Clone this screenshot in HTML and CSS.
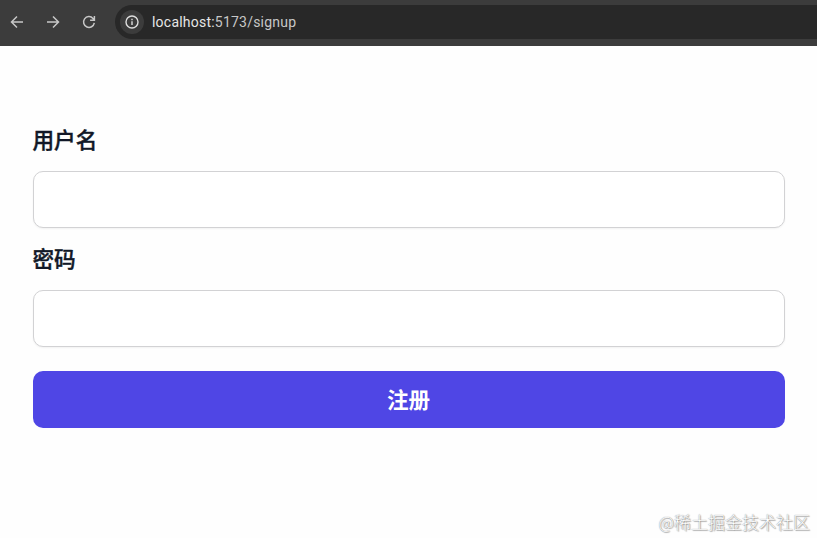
FILE: index.html
```html
<!DOCTYPE html>
<html lang="zh-CN">
<head>
<meta charset="utf-8">
<title>注册</title>
<link rel="stylesheet" href="styles.css">
</head>
<body>
<header class="toolbar">
  <nav class="nav">
    <svg class="icon" viewBox="0 0 16 16"><path d="M14 8H2.8M8 2.5 2.5 8 8 13.5"/></svg>
    <svg class="icon" viewBox="0 0 16 16"><path d="M2 8h11.2M8 2.5 13.5 8 8 13.5"/></svg>
    <svg class="icon" viewBox="0 0 16 16"><path d="M13.3 8.9A5.4 5.4 0 1 1 12 4.4L13.1 5.7M13.4 2v4.2H9.1"/></svg>
  </nav>
  <div class="address">
    <span class="info"><svg class="info-icon" viewBox="0 0 16 16"><circle cx="8" cy="8" r="6"/><path d="M8 7.3v3.8M8 4.8v1.4"/></svg></span>
    <span class="url"><span class="host">localhost:</span>5173/signup</span>
  </div>
</header>
<main class="page">
  <form class="form">
    <label class="label" for="username">用户名</label>
    <input class="field" id="username" type="text">
    <label class="label" for="password">密码</label>
    <input class="field" id="password" type="password">
    <button class="submit" type="button">注册</button>
  </form>
  <div class="watermark">@稀土掘金技术社区</div>
</main>
</body>
</html>
```
FILE: styles.css
```css
* { box-sizing: border-box; }
body {
  margin: 0;
  height: 538px;
  overflow: hidden;
  display: flex;
  flex-direction: column;
  background: #fefefe;
  font-family: Inter, "Noto Sans CJK SC", sans-serif;
}
.toolbar {
  height: 46px;
  flex: none;
  display: flex;
  align-items: flex-start;
  padding-top: 5px;
  background: #3c3c3c;
}
.nav {
  height: 34px;
  width: 115px;
  padding-left: 9px;
  display: flex;
  align-items: center;
  gap: 20px;
}
.icon {
  width: 16px;
  height: 16px;
  fill: none;
  stroke: #c7c7c7;
  stroke-width: 1.5;
}
.address {
  flex: 1;
  height: 34px;
  padding-left: 5px;
  display: flex;
  align-items: center;
  gap: 8px;
  background: #282828;
  border-radius: 17px 0 0 17px;
}
.info {
  width: 24px;
  height: 24px;
  display: grid;
  place-items: center;
  background: #3c3c3c;
  border-radius: 50%;
}
.info-icon {
  width: 16px;
  height: 16px;
  fill: none;
  stroke: #dedede;
  stroke-width: 1.4;
}
.url {
  font: 14px/20px Roboto, sans-serif;
  letter-spacing: 0.22px;
  color: #c7c7c7;
}
.host { color: #e6e6e6; }
.page {
  flex: 1;
  display: flex;
  flex-direction: column;
  justify-content: space-between;
}
.form {
  display: flex;
  flex-direction: column;
  padding: 77px 32.5px 0;
}
.label {
  height: 32px;
  margin-bottom: 16px;
  font: 500 21.6px/32px "Noto Sans CJK SC", sans-serif;
  color: #111827;
  -webkit-text-stroke: 0.4px #111827;
}
.field {
  height: 56.5px;
  margin: 0 0 14.5px;
  padding: 0 16px;
  border: 1px solid #d2d2d4;
  border-radius: 10px;
  background: #fff;
  box-shadow: 0 1px 2px rgba(0, 0, 0, 0.05);
  font-size: 21px;
}
.submit {
  height: 56.5px;
  margin-top: 10px;
  padding: 0 0 1px;
  border: 0;
  border-radius: 10px;
  background: #4f46e5;
  color: #fff;
  font: 700 21.6px/32px "Noto Sans CJK SC", sans-serif;
}
.watermark {
  align-self: flex-end;
  margin: 0 7px 4px 0;
  font: 300 17px/24px "Noto Sans CJK SC", sans-serif;
  color: #fff;
  text-shadow: 0 0 1px #666, 1px 1px 1px #aaa;
}
```
